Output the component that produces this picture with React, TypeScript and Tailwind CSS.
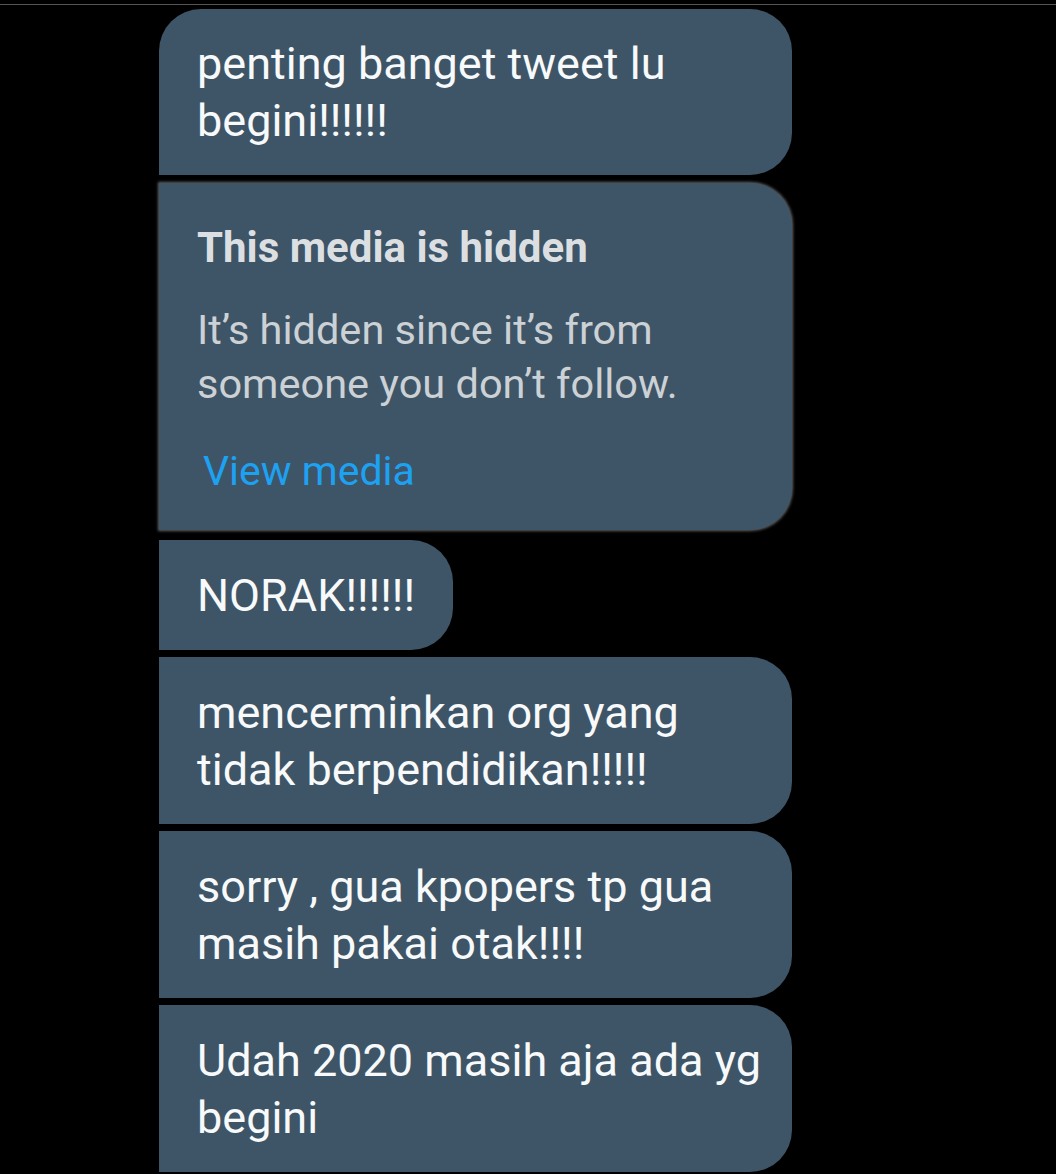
const bubble =
  'bg-[#3e5567] text-[#f7f9fa] text-[45px] leading-[57px] pl-[38px] pr-[22px] pt-[27px] pb-[26px] rounded-tr-[42px] rounded-br-[42px]'

const messages = [
  { id: 1, text: 'penting banget tweet lu begini!!!!!!', first: true },
  { id: 3, text: 'NORAK!!!!!!', short: true },
  { id: 4, text: 'mencerminkan org yang tidak berpendidikan!!!!!' },
  { id: 5, text: 'sorry , gua kpopers tp gua masih pakai otak!!!!' },
  { id: 6, text: 'Udah 2020 masih aja ada yg begini' },
]

function Bubble({ text, first, short }: { text: string; first?: boolean; short?: boolean }) {
  return (
    <div
      className={`${bubble} ${first ? 'rounded-tl-[42px] !pt-[26px]' : ''} ${short ? 'self-start !pr-[38px]' : 'w-[633px]'}`}
    >
      {text}
    </div>
  )
}

export default function App() {
  const [first, ...rest] = messages
  return (
    <div className="min-h-[1174px] bg-black overflow-hidden" style={{ fontFamily: 'Roboto, sans-serif' }}>
      <div className="pt-[4px]">
        <div className="h-px bg-[#555555]" />
      </div>
      <div className="flex flex-col gap-[7px] pt-[4px] pl-[159px] items-start">
        <Bubble text={first.text} first />
        <div className="mt-[1px] mb-[3px] w-[633px] bg-[#3e5567] rounded-tr-[42px] rounded-br-[42px] pl-[38px] pr-[30px] pt-[40px] pb-[34px] shadow-[0_0_3px_1px_rgba(110,110,110,0.9)]">
          <div className="text-[42px] leading-[50px] font-bold text-[#dcdfe2]">This media is hidden</div>
          <div className="mt-[30px] text-[41.5px] leading-[54px] text-[#ccd1d5]">
            It’s hidden since it’s from
            <br />
            someone you don’t follow.
          </div>
          <div className="mt-[35px] pl-[6px] text-[41px] leading-[50px] text-[#1da1f2]">View media</div>
        </div>
        {rest.map((m) => (
          <Bubble key={m.id} text={m.text} short={m.short} />
        ))}
      </div>
    </div>
  )
}
